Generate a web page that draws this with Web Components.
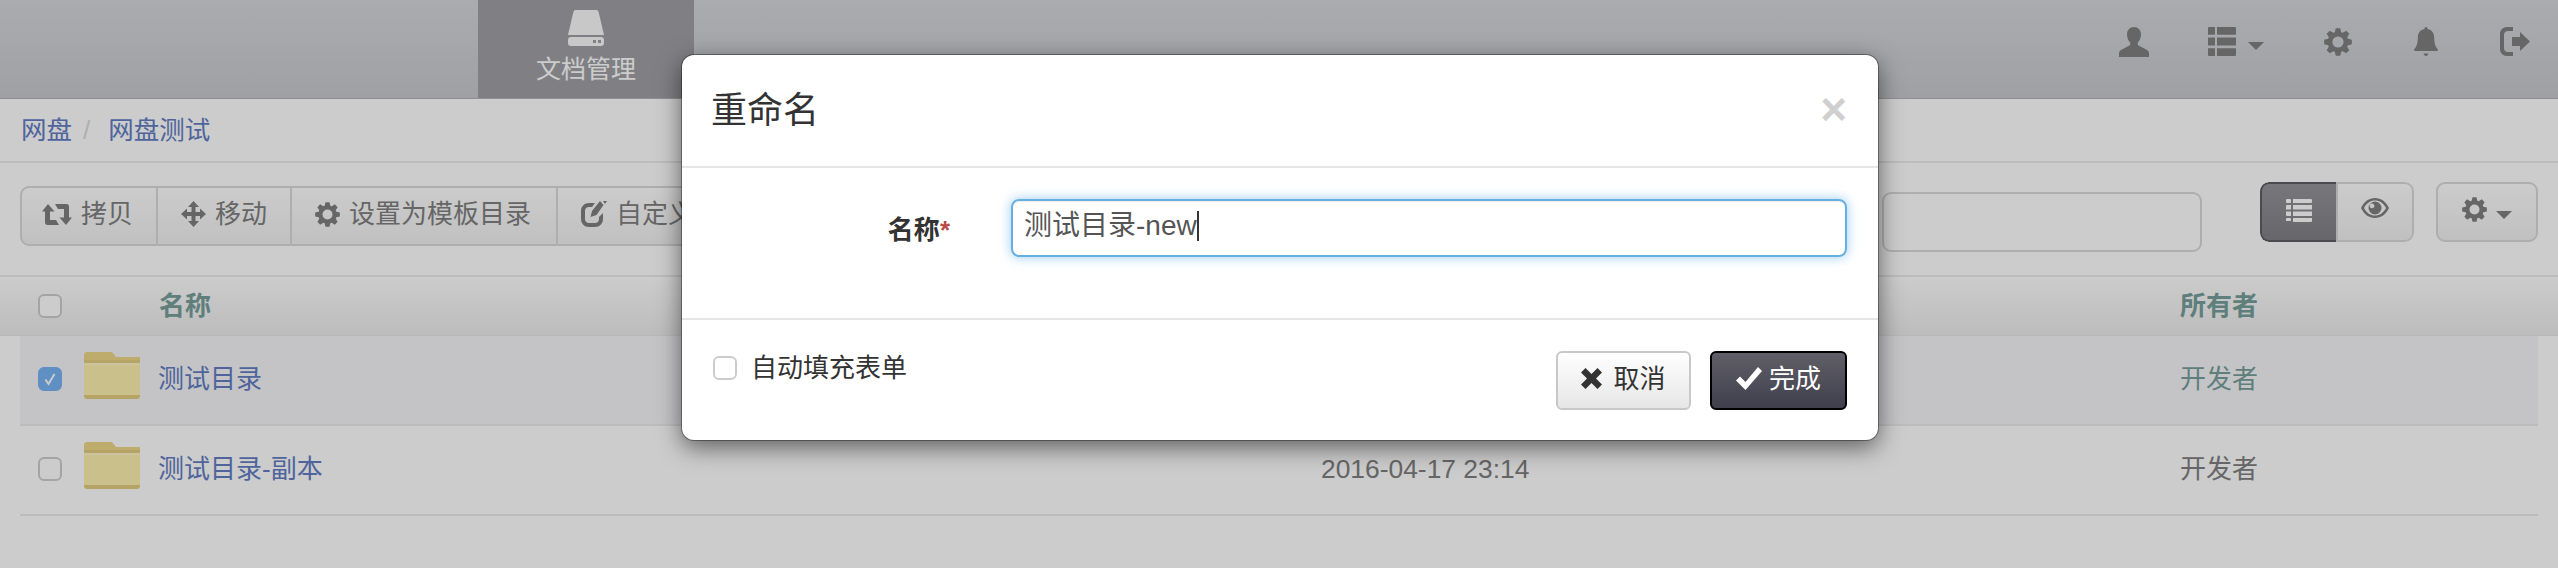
<!DOCTYPE html>
<html lang="zh">
<head>
<meta charset="utf-8">
<title>网盘</title>
<style>
  html, body { margin: 0; height: 100%; }
  body {
    width: 2558px; height: 568px; overflow: hidden; position: relative; background: #fff;
    font: 26px/36px "Liberation Sans", "Noto Sans CJK SC", sans-serif; color: #808080;
  }
</style>
</head>
<body>
<app-nav></app-nav>
<path-bar></path-bar>
<file-toolbar></file-toolbar>
<file-table>
  <file-row checked name="测试目录" owner="开发者"></file-row>
  <file-row name="测试目录-副本" date="2016-04-17 23:14" owner="开发者"></file-row>
</file-table>
<rename-dialog></rename-dialog>

<script>
// gear outline with a round hole, teeth count matches the font icon
function gearPath(size) {
  const c = size / 2, outer = c, inner = c * 0.74, hole = c * 0.4, teeth = 8;
  let d = '';
  for (let i = 0; i < teeth; i++) {
    const a = i * 2 * Math.PI / teeth - Math.PI / 2, w = 0.2;
    const pts = [[inner, a - w * 1.55], [outer, a - w * 0.8], [outer, a + w * 0.8], [inner, a + w * 1.55]];
    pts.forEach(function (p, j) {
      d += (i === 0 && j === 0 ? 'M' : 'L') + (c + p[0] * Math.cos(p[1])).toFixed(2) + ' ' + (c + p[0] * Math.sin(p[1])).toFixed(2);
    });
  }
  d += 'zM' + (c + hole) + ' ' + c + 'a' + hole + ' ' + hole + ' 0 1 0 ' + (-2 * hole) + ' 0a' + hole + ' ' + hole + ' 0 1 0 ' + (2 * hole) + ' 0z';
  return d;
}

const ICONS = {
  user: [30, 30, '<path d="M15 0c-4.4 0-7 3.400-7 7.500 0 3.200 1.300 6.200 3.200 8v2.500L2 23c-1.400.8-2 2-2 4v3h30v-3c0-2-.6-3.200-2-4l-9.200-5v-2.500c1.900-1.800 3.200-4.800 3.200-8C22 3.400 19.400 0 15 0z"/>'],
  thlist: [28, 26, '<path d="M1 0h6v7H0V1a1 1 0 0 1 1-1zM9 0h18a1 1 0 0 1 1 1v6H9zM0 9.500h7v7H0zM9 9.500h19v7H9zM0 19h7v7H1a1 1 0 0 1-1-1zM9 19h19v6a1 1 0 0 1-1 1H9z"/>'],
  gear: [28, 28, '<path fill-rule="evenodd" d="' + gearPath(28) + '"/>'],
  bell: [24, 30, '<path d="M12 0a1.700 1.700 0 0 0-1.600 2C6 2.800 3.800 6 3.800 11c0 6-1.400 9-3.800 11.500 0 1 .6 1.500 2 1.500h20c1.400 0 2-.5 2-1.500C21.600 20 20.200 17 20.200 11c0-5-2.200-8.200-6.600-9A1.700 1.700 0 0 0 12 0zM9.500 26.500h5c-.2 1-1.200 2.500-2.500 2.500s-2.300-1.500-2.500-2.500z"/>'],
  signout: [30, 29, '<path d="M13 0H7C3 0 0 3 0 7v15c0 4 3 7 7 7h6v-4H8c-2.500 0-4-1.500-4-4V8c0-2.500 1.500-4 4-4h5zM20 5l10 9.500L20 24v-5h-8v-9h8z"/>'],
  drive: [36, 36, '<path d="M7 0h22l1.500 1.500L36 25H0L5.500 1.500zM3 27h30a3 3 0 0 1 3 3v3a3 3 0 0 1-3 3H3a3 3 0 0 1-3-3v-3a3 3 0 0 1 3-3z"/><path fill="#a0a1a5" d="M25 30h3v3h-3zM30 30h3v3h-3z"/>'],
  retweet: [30, 21, '<path d="M6 0l6.500 7.500H8V16h6l3 5H5.500C4 21 3 20 3 18.500V7.500H0zM13 0h11.500C26 0 27 1 27 2.500v11h3L24 21l-6.500-7.500H22V5h-6z"/>'],
  move: [25, 26, '<path d="M12.500 0L18 6h-3.500v5H19V7.500L25 13l-6 5.500V15h-4.500v5H18l-5.500 6L7 20h3.500v-5H6v3.500L0 13l6-5.500V11h4.500V6H7z"/>'],
  edit: [26, 26, '<path d="M19 0l-8 10-1.500 6 6-2 7-10zM8 2C3.500 2 0 5.500 0 10v8c0 4.500 3.500 8 8 8h6c4.500 0 8-3.500 8-8v-6l-4 4v2c0 2.500-1.700 4-4 4H8c-2.300 0-4-1.500-4-4v-8c0-2.500 1.700-4 4-4h3l3-4zM22 0l4 0-2 3z"/>'],
  list: [26, 24, '<path d="M1 1h3a1 1 0 0 1 1 1v2a1 1 0 0 1-1 1H1a1 1 0 0 1-1-1V2a1 1 0 0 1 1-1zM7 1h18a1 1 0 0 1 1 1v2a1 1 0 0 1-1 1H7zM1 7h4v4.500H0V8a1 1 0 0 1 1-1zM7 7h19v4.500H7zM0 13.500h5V18H1a1 1 0 0 1-1-1zM7 13.500h19V18H7zM1 20h3a1 1 0 0 1 1 1v2H0v-2a1 1 0 0 1 1-1zM7 20h19v3a1 1 0 0 1-1 1H7z"/>'],
  eye: [28, 20, '<path fill-rule="evenodd" d="M14 0C8 0 3 3.500 0 10c3 6.500 8 10 14 10s11-3.500 14-10C25 3.500 20 0 14 0zM14 2.500c4.500 0 8.500 2.500 11 7.500-2.500 5-6.500 7.500-11 7.500S5.500 15 3 10c2.500-5 6.500-7.500 11-7.500z"/><path fill-rule="evenodd" d="M14 3.500a6.500 6.500 0 1 1 0 13 6.500 6.500 0 0 1 0-13zM11 5.500a2.400 2.400 0 1 0 .01 0z"/>'],
  remove: [21, 21, '<path d="M4.500 0L10.500 6l6-6L21 4.500l-6 6 6 6-4.500 4.500-6-6-6 6L0 16.500l6-6-6-6z"/>'],
  ok: [26, 23, '<path d="M9.500 23L0 13.500l4-4 5.500 5.500L22 0l4 4z"/>']
};

class AppIcon extends HTMLElement {
  connectedCallback() {
    const icon = ICONS[this.getAttribute('name')];
    const w = this.getAttribute('w') || icon[0];
    const h = this.getAttribute('h') || icon[1];
    const root = this.shadowRoot || this.attachShadow({mode: 'open'});
    root.innerHTML = `
      <style>
        :host { display: inline-flex; flex: none; }
        svg { display: block; fill: currentColor; }
      </style>
      <svg width="${w}" height="${h}" viewBox="0 0 ${icon[0]} ${icon[1]}" preserveAspectRatio="none">${icon[2]}</svg>`;
  }
}
customElements.define('app-icon', AppIcon);

const navTemplate = document.createElement('template');
navTemplate.innerHTML = `
  <style>
    :host {
      display: flex; height: 98px; border-bottom: 1px solid #b4b4b6;
      background: linear-gradient(#d5d7dc, #c8c9cd);
      color: #808080; position: relative; box-sizing: content-box;
    }
    .tab {
      margin-left: 478px; width: 216px; background: #a0a1a5; color: #fff;
      display: flex; flex-direction: column; align-items: center;
      padding-top: 10px; box-sizing: border-box; font-size: 25px;
    }
    .tab app-icon { opacity: .95; }
    .tab span { margin-top: 5px; line-height: 36px; }
    .tools { margin-left: auto; display: flex; align-items: flex-start; padding-top: 27px; }
    .caret { width: 0; height: 0; border: 8px solid transparent; border-top-color: currentColor; border-bottom: 0; margin: 15px 0 0 12px; }
    .menu { display: flex; margin-left: 59px; }
    .t3 { margin-left: 60px; margin-top: 1px; }
    .t4 { margin-left: 62px; }
    .t5 { margin-left: 62px; margin-right: 28px; }
  </style>
  <div class="tab"><app-icon name="drive"></app-icon><span>文档管理</span></div>
  <div class="tools">
    <app-icon name="user"></app-icon>
    <div class="menu"><app-icon name="thlist" h="29"></app-icon><div class="caret"></div></div>
    <app-icon class="t3" name="gear"></app-icon>
    <app-icon class="t4" name="bell"></app-icon>
    <app-icon class="t5" name="signout"></app-icon>
  </div>`;
class AppNav extends HTMLElement {
  connectedCallback() {
    if (this.shadowRoot) return;
    this.attachShadow({mode: 'open'}).appendChild(navTemplate.content.cloneNode(true));
  }
}
customElements.define('app-nav', AppNav);

const pathTemplate = document.createElement('template');
pathTemplate.innerHTML = `
  <style>
    :host {
      display: flex; align-items: center; height: 61px; padding: 0 0 1px 21px;
      border-bottom: 2px solid #ececec; color: #637ec3; font-size: 25.500px;
    }
    i { font-style: normal; color: #dcdcdc; margin: 0 18px 0 11px; font-size: 26px; }
  </style>
  <span>网盘</span><i>/</i><span>网盘测试</span>`;
class PathBar extends HTMLElement {
  connectedCallback() {
    if (this.shadowRoot) return;
    this.attachShadow({mode: 'open'}).appendChild(pathTemplate.content.cloneNode(true));
  }
}
customElements.define('path-bar', PathBar);

const toolbarTemplate = document.createElement('template');
toolbarTemplate.innerHTML = `
  <style>
    :host {
      display: flex; align-items: flex-start; height: 114px; box-sizing: border-box;
      border-bottom: 2px solid #ececec; padding-left: 20px; color: #808080;
    }
    .group {
      display: flex; height: 60px; box-sizing: border-box; margin-top: 23px;
      border: 2px solid #dadada; border-radius: 9px;
      background: linear-gradient(#fff, #f1f1f1); width: 800px;
    }
    .group div { display: flex; align-items: center; gap: 9px; box-sizing: border-box; border-right: 2px solid #dadada; padding-bottom: 4px; }
    .b1 { width: 136px; padding-left: 20px; }
    .b2 { width: 134px; padding-left: 23px; }
    .b3 { width: 266px; padding-left: 23px; }
    .b4 { flex: 1; padding-left: 23px; border-right: 0 !important; }
    .search {
      margin: 29px 0 0 auto; width: 320px; height: 60px; box-sizing: border-box;
      border: 2px solid #dadada; border-radius: 9px; background: #fff;
    }
    .views {
      display: flex; margin: 19px 0 0 58px; height: 60px; width: 154px; box-sizing: border-box;
      border-radius: 9px; overflow: hidden;
    }
    .views .on {
      width: 76px; background: linear-gradient(#96969b, #808086); color: #fff;
      border: 2px solid #5e5e63; border-right: 0; border-radius: 9px 0 0 9px;
      display: flex; align-items: center; justify-content: center; padding-bottom: 5px; box-sizing: border-box;
    }
    .views .off {
      flex: 1; background: linear-gradient(#fff, #f1f1f1);
      border: 2px solid #dadada; border-radius: 0 9px 9px 0;
      display: flex; align-items: center; justify-content: center; padding-bottom: 9px; box-sizing: border-box;
    }
    .more {
      display: flex; align-items: center; gap: 9px; justify-content: center;
      margin: 19px 20px 0 22px; width: 102px; height: 60px; box-sizing: border-box;
      border: 2px solid #dadada; border-radius: 9px; background: linear-gradient(#fff, #f1f1f1); padding-bottom: 5px;
    }
    .caret { width: 0; height: 0; border: 8px solid transparent; border-top-color: currentColor; border-bottom: 0; margin-top: 10px; }
  </style>
  <div class="group">
    <div class="b1"><app-icon name="retweet"></app-icon><span>拷贝</span></div>
    <div class="b2"><app-icon name="move"></app-icon><span>移动</span></div>
    <div class="b3"><app-icon name="gear" w="25" h="25"></app-icon><span>设置为模板目录</span></div>
    <div class="b4"><app-icon name="edit"></app-icon><span>自定义</span></div>
  </div>
  <div class="search"></div>
  <div class="views">
    <div class="on"><app-icon name="list"></app-icon></div>
    <div class="off"><app-icon name="eye"></app-icon></div>
  </div>
  <div class="more"><app-icon name="gear" w="25" h="25"></app-icon><div class="caret"></div></div>`;
class FileToolbar extends HTMLElement {
  connectedCallback() {
    if (this.shadowRoot) return;
    this.attachShadow({mode: 'open'}).appendChild(toolbarTemplate.content.cloneNode(true));
  }
}
customElements.define('file-toolbar', FileToolbar);

class CheckBox extends HTMLElement {
  connectedCallback() {
    const root = this.shadowRoot || this.attachShadow({mode: 'open'});
    root.innerHTML = `
      <style>
        :host {
          display: flex; align-items: center; justify-content: center; flex: none;
          width: 24px; height: 24px; box-sizing: border-box;
          border: 2px solid var(--check-border, #cdcdcd); border-radius: 6px; background: #fff;
        }
        :host([checked]) { background: #79b3f4; border-color: #79b3f4; }
        svg { display: block; }
      </style>
      ${this.hasAttribute('checked') ? '<svg width="14" height="14" viewBox="0 0 14 14"><path d="M2.500 7.500L5.500 12 11.500 2" fill="none" stroke="#fff" stroke-width="2"/></svg>' : ''}`;
  }
}
customElements.define('check-box', CheckBox);

const tableTemplate = document.createElement('template');
tableTemplate.innerHTML = `
  <style>
    :host { display: block; }
    .head {
      display: grid; grid-template-columns: 121px 2021px auto; align-items: center;
      height: 59px; box-sizing: border-box; padding-left: 38px;
      background: linear-gradient(#fff, #ececec); border-bottom: 1px solid #e6e6e6;
      font-weight: bold; color: #779f9b;
    }
    ::slotted(file-row) { margin: 0 20px; }
  </style>
  <div class="head"><check-box></check-box><span>名称</span><span>所有者</span></div>
  <slot></slot>`;
class FileTable extends HTMLElement {
  connectedCallback() {
    if (this.shadowRoot) return;
    this.attachShadow({mode: 'open'}).appendChild(tableTemplate.content.cloneNode(true));
  }
}
customElements.define('file-table', FileTable);

class FileRow extends HTMLElement {
  connectedCallback() {
    const root = this.shadowRoot || this.attachShadow({mode: 'open'});
    const checked = this.hasAttribute('checked');
    root.innerHTML = `
      <style>
        :host {
          display: grid; grid-template-columns: 46px 74px 1163px 859px auto; align-items: center;
          height: 90px; box-sizing: border-box; padding: 0 0 3px 18px;
          border-bottom: 2px solid #ececec; color: #808080;
        }
        :host([checked]) { background: #f6f6f9; color: #779f9b; }
        .name { color: #637ec3; }
        .date { font-size: 26.400px; }
        .folder { display: block; margin-top: -7px; }
      </style>
      <check-box ${checked ? 'checked' : ''}></check-box>
      <svg class="folder" width="56" height="47" viewBox="0 0 56 47">
        <path fill="#eed889" d="M0 3a3 3 0 0 1 3-3h25l4 5h24v9H0z"/>
        <path fill="#e4cd80" d="M0 8h56v6H0z"/>
        <path fill="#fdf0b0" d="M0 11h56v33H0z"/>
        <path fill="#fff6c8" d="M1 11h54v2H1z"/>
        <path fill="#e4cd80" d="M0 43h56v1a3 3 0 0 1-3 3H3a3 3 0 0 1-3-3z"/>
      </svg>
      <span class="name">${this.getAttribute('name')}</span>
      <span class="date">${this.getAttribute('date') || ''}</span>
      <span>${this.getAttribute('owner')}</span>`;
  }
}
customElements.define('file-row', FileRow);

const dialogTemplate = document.createElement('template');
dialogTemplate.innerHTML = `
  <style>
    :host { display: block; position: absolute; inset: 0; background: rgba(0,0,0,.2); color: #333; }
    .dialog {
      position: absolute; left: 682px; top: 55px; width: 1196px; height: 385px; box-sizing: border-box;
      display: flex; flex-direction: column; background: #fff; border-radius: 12px;
      box-shadow: 0 0 0 1px rgba(0,0,0,.35), 0 7px 24px rgba(0,0,0,.55);
    }
    header {
      display: flex; align-items: center; justify-content: space-between;
      height: 113px; box-sizing: border-box; padding: 0 31px 0 29px; border-bottom: 2px solid #e5e5e5;
    }
    h3 { margin: 0; font-size: 36px; font-weight: normal; line-height: 48px; }
    .close { color: #cfcfcf; font-weight: bold; font-size: 46px; line-height: 40px; margin-bottom: 4px; }
    .body {
      display: flex; align-items: center; height: 152px; box-sizing: border-box;
      padding: 0 31px 30px 0; border-bottom: 2px solid #e5e5e5;
    }
    label { width: 268px; text-align: right; font-weight: bold; padding-right: 61px; padding-top: 4px; }
    label b { color: #b94a48; }
    .input {
      flex: 1; display: flex; align-items: center; height: 58px; box-sizing: border-box;
      padding: 0 0 4px 11px; color: #555; font-size: 28px;
      border: 2px solid #66afe0; border-radius: 8px;
      box-shadow: inset 0 1px 1px rgba(0,0,0,.075), 0 0 12px rgba(82,168,236,.6);
    }
    .cursor { width: 2px; height: 30px; background: #333; }
    footer { flex: 1; display: flex; align-items: flex-start; padding: 0 31px 0 31px; }
    .auto { display: flex; align-items: center; gap: 14px; margin-top: 30px; --check-border: #ccc; }
    .btn {
      display: flex; align-items: center; justify-content: center; gap: 11px;
      height: 59px; box-sizing: border-box; margin-top: 31px; border-radius: 6px; padding-bottom: 4px;
    }
    .cancel { margin-left: auto; width: 135px; border: 2px solid #c8c8c8; background: linear-gradient(#fff, #e6e6e6); }
    .done { margin-left: 19px; width: 137px; border: 2px solid #000; background: linear-gradient(#605f67, #3f3f4d); color: #fff; gap: 7px; }
  </style>
  <div class="dialog">
    <header><h3>重命名</h3><span class="close">×</span></header>
    <div class="body">
      <label>名称<b>*</b></label>
      <div class="input"><span>测试目录-new</span><span class="cursor"></span></div>
    </div>
    <footer>
      <div class="auto"><check-box></check-box><span>自动填充表单</span></div>
      <div class="btn cancel"><app-icon name="remove"></app-icon><span>取消</span></div>
      <div class="btn done"><app-icon name="ok"></app-icon><span>完成</span></div>
    </footer>
  </div>`;
class RenameDialog extends HTMLElement {
  connectedCallback() {
    if (this.shadowRoot) return;
    this.attachShadow({mode: 'open'}).appendChild(dialogTemplate.content.cloneNode(true));
  }
}
customElements.define('rename-dialog', RenameDialog);
</script>
</body>
</html>
